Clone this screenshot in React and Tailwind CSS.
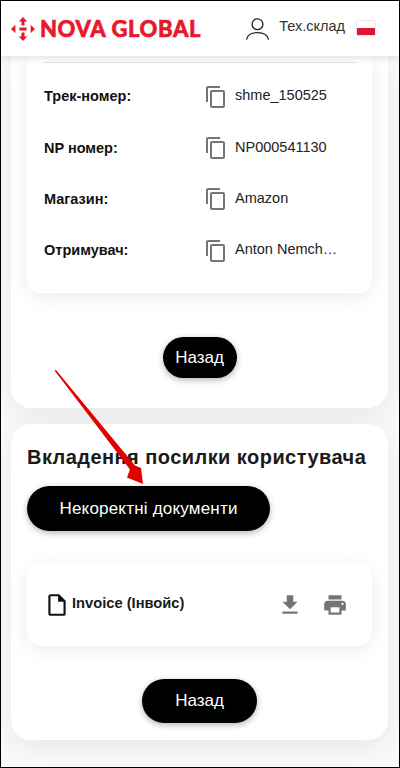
import React from "react";

const Copy = () => (
  <svg width="24" height="24" viewBox="0 0 24 24" fill="#757575" className="shrink-0">
    <path d="M16 1H4c-1.1 0-2 .9-2 2v14h2V3h12V1zm3 4H8c-1.1 0-2 .9-2 2v14c0 1.1.9 2 2 2h11c1.1 0 2-.9 2-2V7c0-1.1-.9-2-2-2zm0 16H8V7h11v14z" />
  </svg>
);

const Row = ({ label, value }) => (
  <div className="flex items-center h-[51.4px]">
    <div className="w-[177px] pl-[17px] pt-[1px] text-[14.5px] font-bold text-[#111]">{label}</div>
    <Copy />
    <div className="ml-[7px] -mt-[1px] w-[105px] truncate text-[14.5px] text-[#222]">{value}</div>
  </div>
);

const Logo = () => (
  <div className="flex items-center">
    <svg width="24" height="24" viewBox="0 0 24 24" fill="#e8192c" className="shrink-0">
      <path d="M12 0l4.200 4.600h-2.700v4h-3v-4H7.800z" />
      <path d="M12 24l4.200-4.600h-2.700v-4h-3v4H7.800z" />
      <path d="M0 12l4.400-4.200v8.400z" />
      <path d="M24 12l-4.400-4.200v8.400z" />
      <path d="M8.400 10.500h7.200v3H8.400z" />
    </svg>
    <span className="ml-[5px] font-['Lato',sans-serif] font-black text-[22px] tracking-[0.6px] text-[#e8192c] leading-none [-webkit-text-stroke:0.6px_#e8192c]">NOVA GLOBAL</span>
  </div>
);

export default function App() {
  return (
    <div className="relative w-[400px] h-[768px] border border-black overflow-hidden bg-white flex flex-col font-['Liberation_Sans',sans-serif]">
      <header className="relative z-10 h-[55px] shrink-0 bg-white flex items-center pl-[10px] pr-[24px] shadow-[0_2px_8px_rgba(0,0,0,0.12)]">
        <Logo />
        <svg width="25" height="24" viewBox="0 0 26 24" fill="none" stroke="#222" strokeWidth="1.4" className="ml-auto shrink-0">
          <circle cx="13" cy="7" r="5.6" />
          <path d="M1.500 23c1-5 5.500-7.300 11.500-7.300S23.500 18 24.500 23" />
        </svg>
        <span className="ml-[9px] text-[14.5px] text-[#333] -mt-[3px]">Тех.склад</span>
        <div className="ml-[12px] w-[18px] h-[14px] -mt-[1px] flex flex-col shadow-[0_0_2px_rgba(0,0,0,0.25)]">
          <div className="flex-1 bg-white" />
          <div className="flex-1 bg-[#dc143c]" />
        </div>
      </header>

      <main className="flex-1 bg-[#fafafa] pl-[10px] pr-[11px] flex flex-col gap-[16px]">
        <section className="h-[352px] shrink-0 bg-white rounded-b-[20px] px-[16px] flex flex-col items-center shadow-[0_8px_30px_rgba(0,0,0,0.08)]">
          <div className="w-full h-[237px] shrink-0 bg-white rounded-b-[14px] pt-[6px] shadow-[0_4px_20px_rgba(0,0,0,0.08)]">
            <div className="mx-[17px] h-px bg-[#e0e0e0] mb-[8px]" />
            <Row label="Трек-номер:" value="shme_150525" />
            <Row label="NP номер:" value="NP000541130" />
            <Row label="Магазин:" value="Amazon" />
            <Row label="Отримувач:" value="Anton Nemchenko" />
          </div>
          <button className="mt-[44px] h-[41px] w-[74px] rounded-full bg-black text-white text-[17px] shadow-[0_2px_6px_rgba(0,0,0,0.3)]">Назад</button>
        </section>

        <section className="h-[316px] shrink-0 bg-white rounded-[20px] px-[16px] pt-[19px] flex flex-col shadow-[0_8px_30px_rgba(0,0,0,0.08)]">
          <h2 className="h-[28px] leading-[28px] text-[20px] font-bold text-[#1a1a1a] tracking-[0.45px] whitespace-nowrap">Вкладення посилки користувача</h2>
          <button className="mt-[15px] h-[45px] w-[243px] rounded-full bg-black text-white text-[17px] tracking-[0.2px] shadow-[0_2px_6px_rgba(0,0,0,0.3)]">Некоректні документи</button>
          <div className="mt-[32px] h-[83px] shrink-0 bg-white rounded-[14px] pl-[17px] pr-[24px] flex items-center shadow-[0_4px_20px_rgba(0,0,0,0.08)]">
            <svg width="26" height="26" viewBox="0 0 24 24" fill="#111" className="shrink-0">
              <path d="M14 2H6c-1.100 0-1.990.9-1.990 2L4 20c0 1.100.89 2 1.990 2H18c1.100 0 2-.9 2-2V8l-6-6zM6 20V4h7v5h5v11H6z" />
            </svg>
            <span className="ml-[2px] -mt-[2px] text-[14.7px] font-bold text-[#1a1a1a]">Invoice (Інвойс)</span>
            <svg width="26" height="26" viewBox="0 0 24 24" fill="#757575" className="ml-auto shrink-0">
              <path d="M19 9h-4V3H9v6H5l7 7 7-7zM5 18v2h14v-2H5z" />
            </svg>
            <svg width="26" height="26" viewBox="0 0 24 24" fill="#757575" className="ml-[19px] shrink-0">
              <path d="M19 8H5c-1.660 0-3 1.340-3 3v6h4v4h12v-4h4v-6c0-1.660-1.340-3-3-3zm-3 11H8v-5h8v5zm3-7c-.55 0-1-.45-1-1s.45-1 1-1 1 .45 1 1-.45 1-1 1zm-1-9H6v4h12V3z" />
            </svg>
          </div>
          <button className="self-center mt-[33px] h-[44px] w-[115px] rounded-full bg-black text-white text-[17px] shadow-[0_2px_6px_rgba(0,0,0,0.3)]">Назад</button>
        </section>
      </main>

      <svg className="absolute left-[0px] top-[0px] z-20 pointer-events-none" width="398" height="766" viewBox="0 0 398 766">
        <path d="M53.500 369.500L55 369L134 464.500L140 467L142 483L126 476.500L129 468.500z" fill="#e00000" />
      </svg>
    </div>
  );
}
